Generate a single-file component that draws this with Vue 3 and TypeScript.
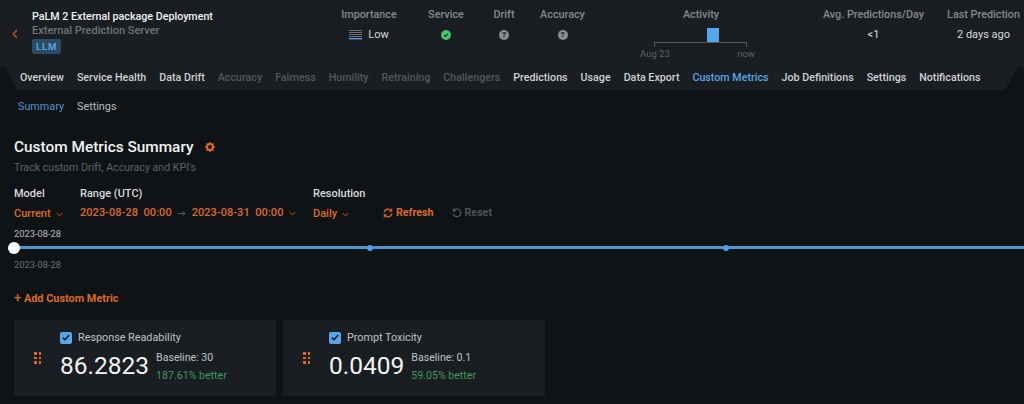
<script setup lang="ts">
interface Tab { label: string; state?: 'off' | 'active' }
interface Metric { name: string; value: string; baseline: string; delta: string }

const tabs: Tab[] = [
  { label: 'Overview' },
  { label: 'Service Health' },
  { label: 'Data Drift' },
  { label: 'Accuracy', state: 'off' },
  { label: 'Fairness', state: 'off' },
  { label: 'Humility', state: 'off' },
  { label: 'Retraining', state: 'off' },
  { label: 'Challengers', state: 'off' },
  { label: 'Predictions' },
  { label: 'Usage' },
  { label: 'Data Export' },
  { label: 'Custom Metrics', state: 'active' },
  { label: 'Job Definitions' },
  { label: 'Settings' },
  { label: 'Notifications' },
]

const metrics: Metric[] = [
  { name: 'Response Readability', value: '86.2823', baseline: 'Baseline: 30', delta: '187.61% better' },
  { name: 'Prompt Toxicity', value: '0.0409', baseline: 'Baseline: 0.1', delta: '59.05% better' },
]
</script>

<template>
  <div class="page">
    <header class="top">
      <div class="identity">
        <svg class="back" width="6" height="10" viewBox="0 0 6 10"><path d="M5 1 1.2 5 5 9" fill="none" stroke="#b4591f" stroke-width="1.4" /></svg>
        <div class="names">
          <div class="title">PaLM 2 External package Deployment</div>
          <div class="subtitle">External Prediction Server</div>
          <span class="badge">LLM</span>
        </div>
      </div>

      <div class="stat s-imp">
        <div class="stat-label">Importance</div>
        <div class="stat-value imp">
          <svg width="13" height="10" viewBox="0 0 13 10">
            <rect y="0" width="13" height="1" fill="#6b7074" />
            <rect y="2" width="13" height="1" fill="#6b7074" />
            <rect y="4" width="13" height="1" fill="#6b7074" />
            <rect y="6" width="13" height="1" fill="#6b7074" />
            <rect y="8" width="13" height="1.4" fill="#4f9fe6" />
          </svg>
          <span>Low</span>
        </div>
      </div>
      <div class="stat s-svc">
        <div class="stat-label">Service</div>
        <div class="stat-value">
          <svg width="10" height="10" viewBox="0 0 10 10"><circle cx="5" cy="5" r="5" fill="#48c46c" /><path d="M3 5.1 4.4 6.5 7 3.8" fill="none" stroke="#14331f" stroke-width="1.2" /></svg>
        </div>
      </div>
      <div class="stat s-drift">
        <div class="stat-label">Drift</div>
        <div class="stat-value"><span class="unknown">?</span></div>
      </div>
      <div class="stat s-acc">
        <div class="stat-label">Accuracy</div>
        <div class="stat-value"><span class="unknown">?</span></div>
      </div>
      <div class="stat s-act">
        <div class="stat-label">Activity</div>
        <div class="activity">
          <div class="act-plot"><span class="act-bar"></span></div>
          <div class="act-axis"><span>Aug 23</span><span>now</span></div>
        </div>
      </div>
      <div class="stat s-avg">
        <div class="stat-label">Avg. Predictions/Day</div>
        <div class="stat-value">&lt;1</div>
      </div>
      <div class="stat s-last">
        <div class="stat-label">Last Prediction</div>
        <div class="stat-value">2 days ago</div>
      </div>
    </header>

    <nav class="tabs">
      <span v-for="t in tabs" :key="t.label" class="tab" :class="t.state">{{ t.label }}</span>
    </nav>

    <div class="subtabs">
      <span class="sub-active">Summary</span>
      <span>Settings</span>
    </div>

    <main class="content">
      <div class="heading">
        <h1>Custom Metrics Summary</h1>
        <svg class="gear" width="10" height="10" viewBox="0 0 10 10">
          <circle cx="5" cy="5" r="2.9" fill="none" stroke="#dc6a26" stroke-width="2" />
          <path d="M5 0v10M0 5h10M1.5 1.5l7 7M8.5 1.5l-7 7" stroke="#dc6a26" stroke-width="1.5" stroke-dasharray="1.7 6.6" />
        </svg>
      </div>
      <p class="lede">Track custom Drift, Accuracy and KPI's</p>

      <div class="filters">
        <div class="filter f-model">
          <div class="f-label">Model</div>
          <div class="f-value"><span>Current</span><svg class="chev" width="7" height="5" viewBox="0 0 8 5"><path d="M.7.7 4 4 7.3.7" /></svg></div>
        </div>
        <div class="filter f-range">
          <div class="f-label">Range (UTC)</div>
          <div class="f-value strong">
            <span>2023-08-28&nbsp;&nbsp;00:00</span>
            <svg class="arrow" width="8" height="7" viewBox="0 0 8 7"><path d="M0 3.5h7M4.5 1 7 3.5 4.5 6" fill="none" stroke="#55595c" /></svg>
            <span>2023-08-31&nbsp;&nbsp;00:00</span>
            <svg class="chev" width="7" height="5" viewBox="0 0 8 5"><path d="M.7.7 4 4 7.3.7" /></svg>
          </div>
        </div>
        <div class="filter f-res">
          <div class="f-label">Resolution</div>
          <div class="f-value"><span>Daily</span><svg class="chev" width="7" height="5" viewBox="0 0 8 5"><path d="M.7.7 4 4 7.3.7" /></svg></div>
        </div>
        <div class="action refresh">
          <svg width="10" height="10" viewBox="0 0 10 10" fill="none" stroke="#dc6a26" stroke-width="1.4"><path d="M1 4.3A4 4 0 0 1 8 2.6M9 5.7A4 4 0 0 1 2 7.4" /><path d="M8.7.6v2.6H6.1M1.3 9.4V6.8h2.6" stroke-width="1.1" /></svg>
          <span>Refresh</span>
        </div>
        <div class="action reset">
          <svg width="10" height="10" viewBox="0 0 10 10" fill="none" stroke="#55595c" stroke-width="1.2"><path d="M2 2.2A3.9 3.9 0 1 1 1.2 6" /><path d="M1.4.5v2.3h2.3" /></svg>
          <span>Reset</span>
        </div>
      </div>

      <div class="date top-date">2023-08-28</div>
      <div class="timeline">
        <span class="knob"></span>
        <span class="dot"></span>
        <span class="dot"></span>
      </div>
      <div class="date low-date">2023-08-28</div>

      <div class="add"><span class="plus">+</span> Add Custom Metric</div>

      <div class="cards">
        <section v-for="m in metrics" :key="m.name" class="card">
          <div class="grip"><i v-for="n in 6" :key="n"></i></div>
          <div class="card-body">
            <div class="card-head">
              <span class="check"><svg width="8" height="7" viewBox="0 0 8 7"><path d="M.8 3.6 3 5.7 7.2 1" fill="none" stroke="#10161c" stroke-width="1.5" /></svg></span>
              <span class="card-name">{{ m.name }}</span>
            </div>
            <div class="card-main">
              <div class="value">{{ m.value }}</div>
              <div class="compare">
                <div class="baseline">{{ m.baseline }}</div>
                <div class="delta">{{ m.delta }}</div>
              </div>
            </div>
          </div>
        </section>
      </div>
    </main>
  </div>
</template>

<style>
html, body { margin: 0; background: #101316; }
</style>

<style scoped>
.page {
  width: 1024px;
  height: 404px;
  overflow: hidden;
  background: #101316;
  font-family: Roboto, "Liberation Sans", sans-serif;
  color: #d8dadb;
  font-size: 11px;
}
.top {
  height: 67px;
  background: #1a1e22;
  display: flex;
  align-items: flex-start;
  box-sizing: border-box;
  position: relative;
}
.identity { width: 341px; display: flex; flex: none; }
.back { margin: 29px 0 0 12px; flex: none; }
.names { margin: 10px 0 0 14px; }
.title { font-size: 10.7px; font-weight: 500; color: #f0f1f1; line-height: 14px; }
.subtitle { font-size: 11px; font-weight: 500; color: #6f7477; line-height: 14px; }
.badge {
  display: inline-block;
  margin-top: 1px;
  height: 15px;
  line-height: 15px;
  padding: 0 4px;
  background: #2b4a66;
  color: #5ba4e2;
  font-size: 9.5px;
  font-weight: 700;
  letter-spacing: .8px;
  border-radius: 2px;
}
.stat { flex: none; text-align: center; padding-top: 8px; }
.stat-label { font-size: 10.8px; font-weight: 500; color: #85898c; line-height: 13px; white-space: nowrap; display: flex; justify-content: center; }
.stat-value { height: 14px; margin-top: 7px; line-height: 14px; font-size: 11px; color: #d8dadb; display: flex; justify-content: center; align-items: center; }
.imp { gap: 6px; }
.s-imp { width: 56px; }
.s-svc { width: 36px; margin-left: 31px; }
.s-drift { width: 22px; margin-left: 29px; }
.s-acc { width: 45px; margin-left: 25px; }
.s-act { width: 36px; margin-left: 98px; position: relative; }
.s-avg { width: 101px; margin-left: 104px; }
.s-last { width: 73px; margin-left: 23px; }
.unknown {
  width: 10px; height: 10px; border-radius: 50%;
  background: #8a8e91; color: #1a1e22;
  font-size: 8px; font-weight: 900; line-height: 10px; text-align: center;
}
.activity { position: absolute; left: -29px; top: 27px; width: 93px; }
.act-plot {
  height: 15px;
  border-bottom: 1px solid #55595c;
  position: relative;
}
.act-plot::before, .act-plot::after {
  content: ""; position: absolute; bottom: -5px; width: 1px; height: 5px; background: #55595c;
}
.act-plot::before { left: 0; }
.act-plot::after { right: 0; }
.act-bar { position: absolute; left: 53px; top: 1px; width: 12px; height: 14px; background: #55a6ec; }
.act-axis { display: flex; justify-content: space-between; font-size: 9.5px; color: #5e6265; margin: 5px -8px 0 -14px; line-height: 11px; }

.tabs {
  height: 23px;
  margin: 0 6px;
  background: #1a1e22;
  clip-path: polygon(0 0, 100% 0, 100% 0, 98.7% 100%, 1% 100%, 0 0);
  display: flex;
  gap: 13px;
  padding-left: 14px;
  font-size: 10.7px;
  font-weight: 500;
  color: #cfd1d2;
  line-height: 22px;
  white-space: nowrap;
}
.tab.off { color: #54585b; }
.tab.active { color: #5ba4e2; }

.subtabs { display: flex; gap: 13px; padding: 10px 0 0 18px; font-size: 10.8px; line-height: 14px; color: #b9bcbe; }
.sub-active { color: #4f93cf; }

.content { padding: 0 0 0 14px; }
.heading { display: flex; align-items: center; margin-top: 23px; }
h1 { margin: 0; font-size: 15.4px; font-weight: 500; color: #f2f3f3; line-height: 20px; }
.gear { margin-left: 11px; }
.lede { margin: 4px 0 0; font-size: 10.65px; line-height: 14px; color: #5e6265; }

.filters { display: flex; align-items: flex-start; margin-top: 12px; height: 38px; }
.filter { flex: none; }
.f-label { font-size: 11px; font-weight: 500; color: #d8dadb; line-height: 14px; }
.f-value { margin-top: 6px; display: flex; align-items: center; gap: 5px; font-size: 11px; font-weight: 500; color: #dc6a26; line-height: 14px; white-space: pre; }
.f-value.strong { margin-top: 5px; font-weight: 500; gap: 6px; letter-spacing: .05px; }
.chev { fill: none; stroke: currentColor; stroke-width: 1; }
.f-model { width: 66px; }
.f-range { width: 233px; }
.f-res { width: 70px; }
.action { display: flex; align-items: center; gap: 3px; margin-top: 19px; line-height: 14px; font-size: 10.7px; font-weight: 700; }
.refresh { color: #dc6a26; }
.reset { color: #4e5255; margin-left: 18px; }

.date { font-size: 9.3px; line-height: 12px; }
.top-date { margin-top: 3px; color: #b9bcbe; }
.low-date { margin-top: 10px; color: #6a6e71; }
.timeline {
  margin-top: 6px;
  height: 3px;
  background: #4f93cf;
  display: flex;
  align-items: center;
}
.timeline span { flex: none; display: block; }
.knob { width: 12px; height: 12px; margin-left: -6px; border-radius: 50%; background: #fff; }
.dot { width: 6px; height: 6px; border-radius: 50%; background: #4f9fe6; margin-left: 347px; }
.dot + .dot { margin-left: 350px; }

.add { margin-top: 20px; font-size: 10.9px; font-weight: 700; color: #dc6a26; line-height: 14px; }
.plus { font-size: 13px; font-weight: 500; }

.cards { display: flex; gap: 7px; margin-top: 14px; }
.card { width: 262px; height: 76px; background: #1a1e22; box-sizing: border-box; display: flex; flex: none; }
.grip { width: 7px; height: 12px; margin: 32px 0 0 20px; display: grid; grid-template-columns: 2.5px 2.5px; grid-auto-rows: 2.5px; gap: 2px 2px; flex: none; }
.grip i { background: #dc6a26; }
.card-body { margin: 11px 0 0 19px; }
.card-head { display: flex; align-items: center; gap: 6px; height: 13px; }
.check { width: 12px; height: 12px; background: #55a6ec; border-radius: 2px; display: flex; align-items: center; justify-content: center; }
.card-name { font-size: 10.8px; color: #bfc2c3; }
.card-main { display: flex; align-items: flex-start; gap: 7px; margin-top: 6px; }
.value { font-size: 24.5px; color: #f2f3f3; line-height: 30px; margin-top: 1px; }
.compare { padding-top: 1px; }
.baseline { font-size: 10.6px; color: #bfc2c3; line-height: 13px; }
.delta { font-size: 10.6px; color: #3f9a58; line-height: 13px; margin-top: 5px; }
</style>
